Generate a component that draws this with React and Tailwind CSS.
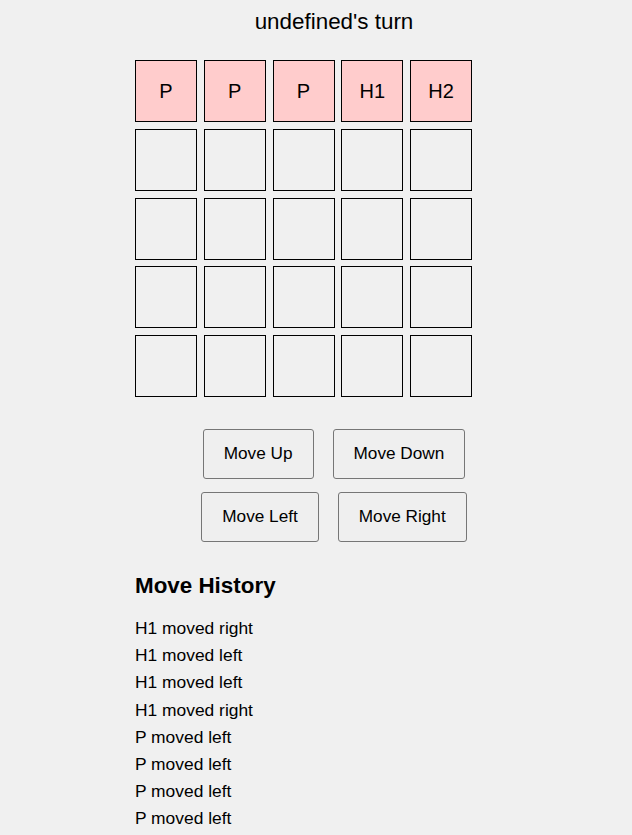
export default function App() {
  const top = ["P", "P", "P", "H1", "H2"];
  const cells = [];
  for (let r = 0; r < 5; r++) {
    for (let c = 0; c < 5; c++) {
      const label = r === 0 ? top[c] : "";
      cells.push(
        <div
          key={`${r}-${c}`}
          className={`h-[62px] border border-black flex items-center justify-center text-[20px] ${r === 0 ? "bg-[#ffcccc]" : ""}`}
        >
          {label}
        </div>
      );
    }
  }
  const history = [
    "H1 moved right",
    "H1 moved left",
    "H1 moved left",
    "H1 moved right",
    "P moved left",
    "P moved left",
    "P moved left",
    "P moved left",
  ];
  const btn =
    "px-[20px] h-[50px] text-[17.2px] bg-[#efefef] border border-[#767676] rounded-[3px] text-black";
  return (
    <div className="min-h-[835px] bg-[#f0f0f0] text-black font-['Liberation_Sans',Arial,sans-serif]">
      <div className="ml-[135px] w-[398px] pt-[9px]">
        <div className="text-center text-[22.4px] leading-[26px]">undefined's turn</div>
        <div className="mt-[25px] w-[337px] grid grid-cols-5 gap-[6.75px]">{cells}</div>
        <div className="mt-[32px] flex justify-center gap-[19px]">
          <button className={btn}>Move Up</button>
          <button className={btn}>Move Down</button>
        </div>
        <div className="mt-[13px] flex justify-center gap-[19px]">
          <button className={btn}>Move Left</button>
          <button className={btn}>Move Right</button>
        </div>
        <div className="mt-[31px] text-[22.4px] font-bold leading-[26px]">Move History</div>
        <ul className="mt-[16px] text-[17.4px]">
          {history.map((h, i) => (
            <li key={i} className="leading-[27.2px]">{h}</li>
          ))}
        </ul>
      </div>
    </div>
  );
}
